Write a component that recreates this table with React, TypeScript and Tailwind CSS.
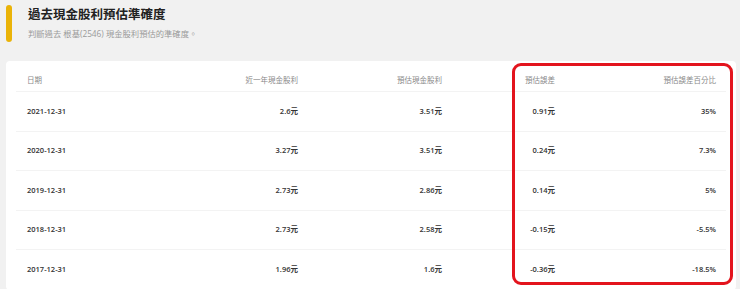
import React from 'react'

type Row = {
  date: string
  recent: string
  estimate: string
  diff: string
  pct: string
}

const ROWS: Row[] = [
  { date: '2021-12-31', recent: '2.6元', estimate: '3.51元', diff: '0.91元', pct: '35%' },
  { date: '2020-12-31', recent: '3.27元', estimate: '3.51元', diff: '0.24元', pct: '7.3%' },
  { date: '2019-12-31', recent: '2.73元', estimate: '2.86元', diff: '0.14元', pct: '5%' },
  { date: '2018-12-31', recent: '2.73元', estimate: '2.58元', diff: '-0.15元', pct: '-5.5%' },
  { date: '2017-12-31', recent: '1.96元', estimate: '1.6元', diff: '-0.36元', pct: '-18.5%' },
]

const GRID = 'grid grid-cols-[154px_139px_144px_113px_158px]'

export default function App() {
  return (
    <div className="relative h-[289px] w-full overflow-hidden bg-[#f1f1f1] font-['Open_Sans','Noto_Sans_CJK_TC',sans-serif]">
      {/* ── Section heading ─────────────────────────── */}
      <div className="flex h-[61px] pl-[6px] pt-[5px]">
        <div className="h-[37px] w-[6px] shrink-0 rounded-full bg-[#eab308]" />
        <div className="ml-[16px] pt-[1px]">
          <h2 className="text-[12.5px] font-bold leading-[17px] text-[#222]">過去現金股利預估準確度</h2>
          <p className="mt-[5px] text-[8.3px] leading-[12px] text-[#9a9a9a]">判斷過去 根基(2546) 現金股利預估的準確度。</p>
        </div>
      </div>

      {/* ── Table card ──────────────────────────────── */}
      <div className="ml-[6px] mr-[4px] rounded-[4px] bg-white px-[10px] pt-[10px]">
        <div className={`${GRID} h-[21px] items-center border-b border-[#f3f3f3] text-[7.5px] text-[#8a8a8a]`}>
          <div className="pl-[11px]">日期</div>
          <div className="pr-[11px] text-right">近一年現金股利</div>
          <div className="pr-[11px] text-right">預估現金股利</div>
          <div className="pr-[11px] text-right">預估誤差</div>
          <div className="pr-[8px] text-right">預估誤差百分比</div>
        </div>
        {ROWS.map((r) => (
          <div
            key={r.date}
            className={`${GRID} h-[39.5px] items-center border-b border-[#f3f3f3] text-[7.5px] font-semibold text-[#333]`}
          >
            <div className="pl-[11px]">{r.date}</div>
            <div className="pr-[11px] text-right">{r.recent}</div>
            <div className="pr-[11px] text-right">{r.estimate}</div>
            <div className="pr-[11px] text-right">{r.diff}</div>
            <div className="pr-[8px] text-right">{r.pct}</div>
          </div>
        ))}
      </div>

      {/* ── Highlight annotation over the last two columns ── */}
      <div className="pointer-events-none absolute left-[512px] top-[63px] h-[222px] w-[221px] rounded-[9px] border-[3px] border-[#e3141d]" />
    </div>
  )
}
